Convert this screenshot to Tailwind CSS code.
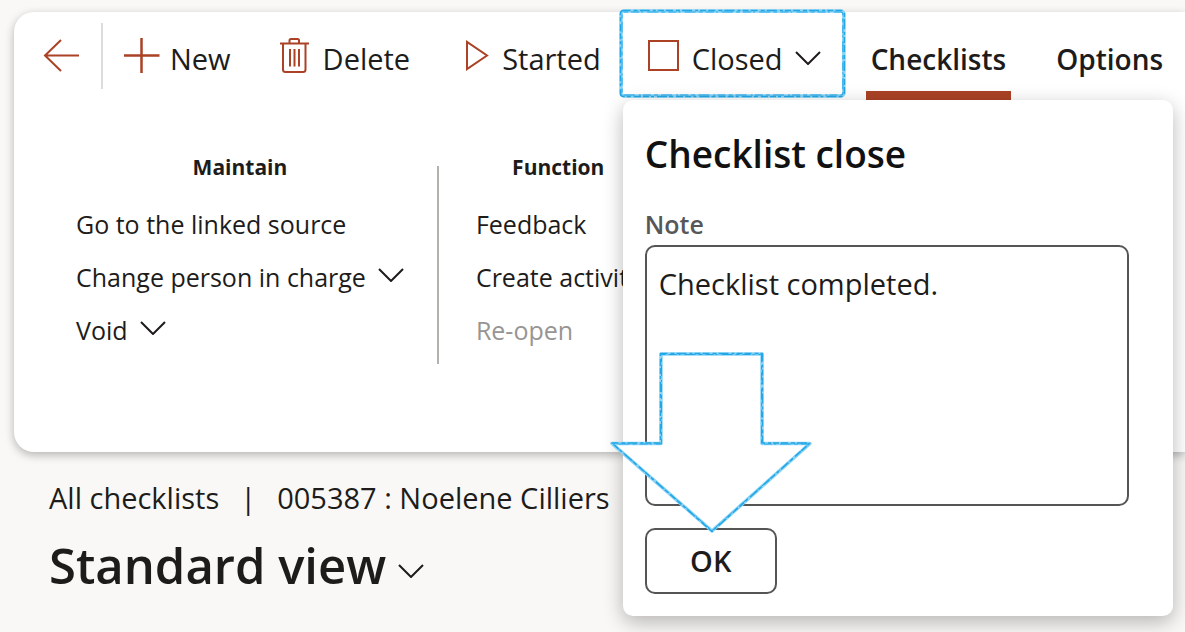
<!DOCTYPE html>
<html lang="en">
<head>
  <meta charset="utf-8" />
  <meta name="viewport" content="width=device-width, initial-scale=1.0" />
  <title>Checklists</title>
  <script src="https://cdn.jsdelivr.net/npm/@tailwindcss/browser@4"></script>
</head>
<body class="min-h-screen overflow-hidden bg-[#f9f8f6] font-['Open_Sans','Noto_Sans',sans-serif] text-[#1d1c1a]">
  <!-- Action pane -->
  <header class="ml-3.5 mt-3 rounded-l-[20px] bg-white pb-22 shadow-[0_3px_10px_rgba(0,0,0,0.28)]">
    <div class="flex h-22 whitespace-nowrap text-[29px] leading-10">
      <button type="button" aria-label="Back" class="flex w-[87px] items-center pl-[29px]">
        <svg class="h-9 w-9" viewBox="0 0 36 36" fill="none" stroke="#ab4225" stroke-width="2">
          <path d="M36 17.500H2M18 2L2 17.500L18 33" />
        </svg>
      </button>
      <div class="my-[11px] w-0.5 bg-[#dcdcdc]"></div>
      <button type="button" class="ml-[21px] flex items-center gap-2.5">
        <svg class="h-9 w-9" viewBox="0 0 36 36" fill="none" stroke="#ab4225" stroke-width="2.500">
          <path d="M0 17.500H35.500M17.500 0V35" />
        </svg>
        <span class="pt-1.5">New</span>
      </button>
      <button type="button" class="ml-[49px] flex items-center gap-[13px]">
        <svg class="h-9 w-[30px]" viewBox="0 0 30 36" fill="none" stroke="#ab4225" stroke-width="2">
          <path d="M0 5.500H29M9.500 5V2.500Q9.500 1 11 1H17.500Q19 1 19 2.500V5M3 5.500V31.500Q3 34 5.500 34H23Q25.500 34 25.500 31.500V5.500M10 11V28.500M14.500 11V28.500M19 11V28.500" />
        </svg>
        <span class="pt-1.5">Delete</span>
      </button>
      <button type="button" class="ml-[55px] flex items-center gap-[13px]">
        <svg class="h-8 w-6" viewBox="0 0 24 32" fill="none" stroke="#ab4225" stroke-width="2">
          <path d="M2 2V29L22 15.500Z" />
        </svg>
        <span class="pt-1.5">Started</span>
      </button>

      <div class="relative ml-[18px] flex">
        <button type="button" aria-expanded="true" class="flex items-center gap-3 pl-[29px] pr-[25px]">
          <svg class="h-8 w-8" viewBox="0 0 32 32" fill="none" stroke="#ab4225" stroke-width="2">
            <rect x="1" y="1" width="29" height="29" />
          </svg>
          <span class="pt-1.5">Closed</span>
          <svg class="mt-1 h-3.5 w-[26px]" viewBox="0 0 26 14" fill="none" stroke="#1d1c1a" stroke-width="2">
            <path d="M1 1L13 13L25 1" />
          </svg>
        </button>

        <!-- Sketched frame round the button -->
        <svg class="pointer-events-none absolute inset-x-0 -top-1 h-[92px] w-full" viewBox="0 0 225 92" preserveAspectRatio="none" fill="none">
          <rect x="2" y="3" width="221" height="85" rx="3" stroke="#8bd3f5" stroke-width="3.500" />
          <rect x="1.500" y="2.500" width="222" height="86" rx="3" stroke="#22a7e8" stroke-width="1.500" stroke-dasharray="7 3 4 2 10 3 3 2 6 2" />
          <rect x="3" y="4" width="219" height="83" rx="2" stroke="#22a7e8" stroke-width="1" stroke-dasharray="4 3 8 2 2 4 11 3" />
        </svg>

        <!-- Close dialog -->
        <form class="absolute left-1 top-full z-10 w-[550px] rounded-[10px] bg-white px-[22px] pb-[22px] pt-7 shadow-[0_6px_20px_rgba(0,0,0,0.28)]">
          <h2 class="text-[37px] font-semibold leading-[52px] text-[#111]">Checklist close</h2>
          <label for="note" class="mt-7 block text-[25px] font-semibold leading-8 text-[#575757]">Note</label>
          <textarea id="note" class="mt-[5px] block h-[261px] w-[484px] resize-none rounded-[10px] border-2 border-[#555] px-3 py-[17px] text-[29px] leading-10 outline-none">Checklist completed.</textarea>
          <button type="submit" class="mt-[22px] block h-[66px] w-[132px] rounded-[10px] border-2 border-[#555] text-[29px] font-semibold">OK</button>

          <svg class="pointer-events-none absolute -left-3.5 top-[250px] h-46 w-51" viewBox="0 0 204 184" stroke-linejoin="round">
            <path d="M52 4H153V93.500H201L103 181L3 93.500H52Z" fill="#fff" stroke="#8bd3f5" stroke-width="3.500" />
            <path d="M51.500 3.500H153.500V93H201L103 181.500L3 93H51.500Z" fill="none" stroke="#22a7e8" stroke-width="1.500" stroke-dasharray="7 3 4 2 10 3 3 2 6 2" />
            <path d="M52.500 4.500H152.500V94H200L103 180.500L4 94H52.500Z" fill="none" stroke="#22a7e8" stroke-width="1" stroke-dasharray="4 3 8 2 2 4 11 3" />
          </svg>
        </form>
      </div>

      <nav class="ml-5 flex gap-[45px] text-[28px] font-semibold">
        <a href="#" class="flex items-center border-b-9 border-[#ab4225] px-[5px] pt-[15px]">Checklists</a>
        <a href="#" class="flex items-center border-b-9 border-transparent pt-[15px]">Options</a>
      </nav>
    </div>

    <div class="flex whitespace-nowrap pl-[62px] pt-[51px] text-[25px] leading-[53px]">
      <section>
        <h3 class="pb-[15px] text-center text-[21px] font-bold leading-8">Maintain</h3>
        <ul>
          <li><a href="#">Go to the linked source</a></li>
          <li>
            <button type="button" class="flex items-center gap-3">
              Change person in charge
              <svg class="mb-1.5 h-3.5 w-[26px]" viewBox="0 0 26 14" fill="none" stroke="#1d1c1a" stroke-width="2">
                <path d="M1 1L13 13L25 1" />
              </svg>
            </button>
          </li>
          <li>
            <button type="button" class="flex items-center gap-3">
              Void
              <svg class="mb-1.5 h-3.5 w-[26px]" viewBox="0 0 26 14" fill="none" stroke="#1d1c1a" stroke-width="2">
                <path d="M1 1L13 13L25 1" />
              </svg>
            </button>
          </li>
        </ul>
      </section>
      <div class="ml-[33px] mr-[37px] mt-[15px] h-[198px] w-0.5 bg-[#b3b3ae]"></div>
      <section>
        <h3 class="pb-[15px] text-center text-[21px] font-bold leading-8">Function</h3>
        <ul>
          <li><a href="#">Feedback</a></li>
          <li><a href="#">Create activity</a></li>
          <li><button type="button" disabled class="text-[#979593]">Re-open</button></li>
        </ul>
      </section>
    </div>
  </header>

  <main class="whitespace-nowrap px-[49px] pt-[26px]">
    <div class="flex text-[29px] leading-10">
      <a href="#">All checklists</a>
      <span class="px-[21px]">|</span>
      <span>005387 : Noelene Cilliers</span>
    </div>
    <h1 class="mt-3 text-[49px] font-semibold leading-[70px]">
      <button type="button" class="flex items-center gap-3">
        Standard view
        <svg class="mt-3 h-3.5 w-[26px]" viewBox="0 0 26 14" fill="none" stroke="#1d1c1a" stroke-width="2">
          <path d="M1 1L13 13L25 1" />
        </svg>
      </button>
    </h1>
  </main>
</body>
</html>
